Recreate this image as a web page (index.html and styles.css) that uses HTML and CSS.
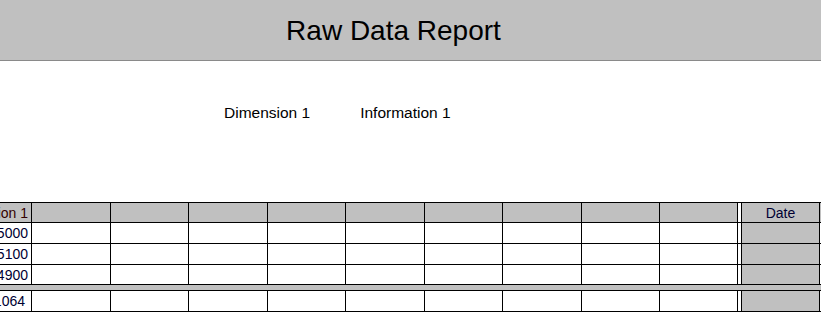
FILE: index.html
```html
<!DOCTYPE html>
<html lang="en">
<head>
    <meta charset="UTF-8">
    <meta name="viewport" content="width=device-width, initial-scale=1.0">
    <title>Raw Data Report</title>
    <link rel="stylesheet" href="styles.css">
</head>

<body>
    <header class="report-head">
        <h1 class="report-title">Raw Data Report</h1>
    </header>

    <section class="report-info">
        <span class="info-item">Dimension 1</span>
        <span class="info-item">Information 1</span>
    </section>

    <main id="raw-grid" class="raw-grid"></main>

    <script>
const rows = [
  { dim: "15000" },
  { dim: "15100" },
  { dim: "14900" },
  { band: true },
  { dim: "1064", total: true }
];

// 9 empty value columns between the dimension and the date
const valueCols = 9;

function addCell(grid, cls, text) {
  const cell = document.createElement('div');
  cell.className = 'cell ' + cls;
  cell.textContent = text || '';
  grid.appendChild(cell);
}

function renderGrid() {
  const grid = document.getElementById('raw-grid');

  addCell(grid, 'head dim', 'Dimension 1');
  for (let i = 0; i < valueCols; i++) addCell(grid, 'head');
  addCell(grid, 'spacer');
  addCell(grid, 'head date', 'Date');
  addCell(grid, 'head');

  rows.forEach(row => {
    if (row.band) {
      addCell(grid, 'band');
      return;
    }
    addCell(grid, row.total ? 'dim total' : 'dim', row.dim);
    for (let i = 0; i < valueCols; i++) addCell(grid, 'value');
    addCell(grid, 'spacer');
    addCell(grid, 'date');
    addCell(grid, 'value');
  });
}

renderGrid();
    </script>
</body>
</html>
```

FILE: styles.css
```css
*{
    margin:0;
    padding:0;
    box-sizing: border-box;
}
body{
    font-family:"Liberation Sans", Arial, sans-serif;
    color: #000;
    background-color: #fff;
    overflow: hidden;
}
.report-head{
    height: 61px;
    background-color: #c0c0c0;
    border-bottom: 1px solid #8a8a8a;
    display: flex;
    align-items: center;
    justify-content: center;
    padding-right: 34px;
    padding-top: 2px;
}
.report-title{
    font-size: 28px;
    font-weight: normal;
    line-height: 28px;
    color: #000;
}
.report-info{
    display: flex;
    padding-top: 43px;
    padding-left: 224px;
    gap: 50px;
    font-size: 15.5px;
    line-height: 18px;
    height: 141px;
}
.raw-grid{
    display: grid;
    grid-template-columns: 60px 78px 77px 78px 77px 78px 77px 78px 77px 77px 3px 77px 78px;
    grid-template-rows: 19px 20px 20px 19px 5px 20px;
    gap: 1px;
    padding: 1px;
    background-color: #000;
    width: max-content;
    margin-left: -30px;
    font-size: 14px;
}
.cell{
    background-color: #fff;
    display: flex;
    align-items: center;
    white-space: nowrap;
    overflow: hidden;
}
.head{
    background-color: #c0c0c0;
    color: #330000;
}
.dim{
    justify-content: flex-end;
    padding-right: 3px;
    color: #000033;
}
.head.dim{
    color: #330000;
}
.dim.total{
    padding-right: 6px;
}
.date{
    background-color: #c0c0c0;
    justify-content: center;
}
.head.date{
    color: #000033;
}
.spacer{
    background-color: #fff;
}
.band{
    grid-column: 1 / -1;
    background-color: #c0c0c0;
}
```
